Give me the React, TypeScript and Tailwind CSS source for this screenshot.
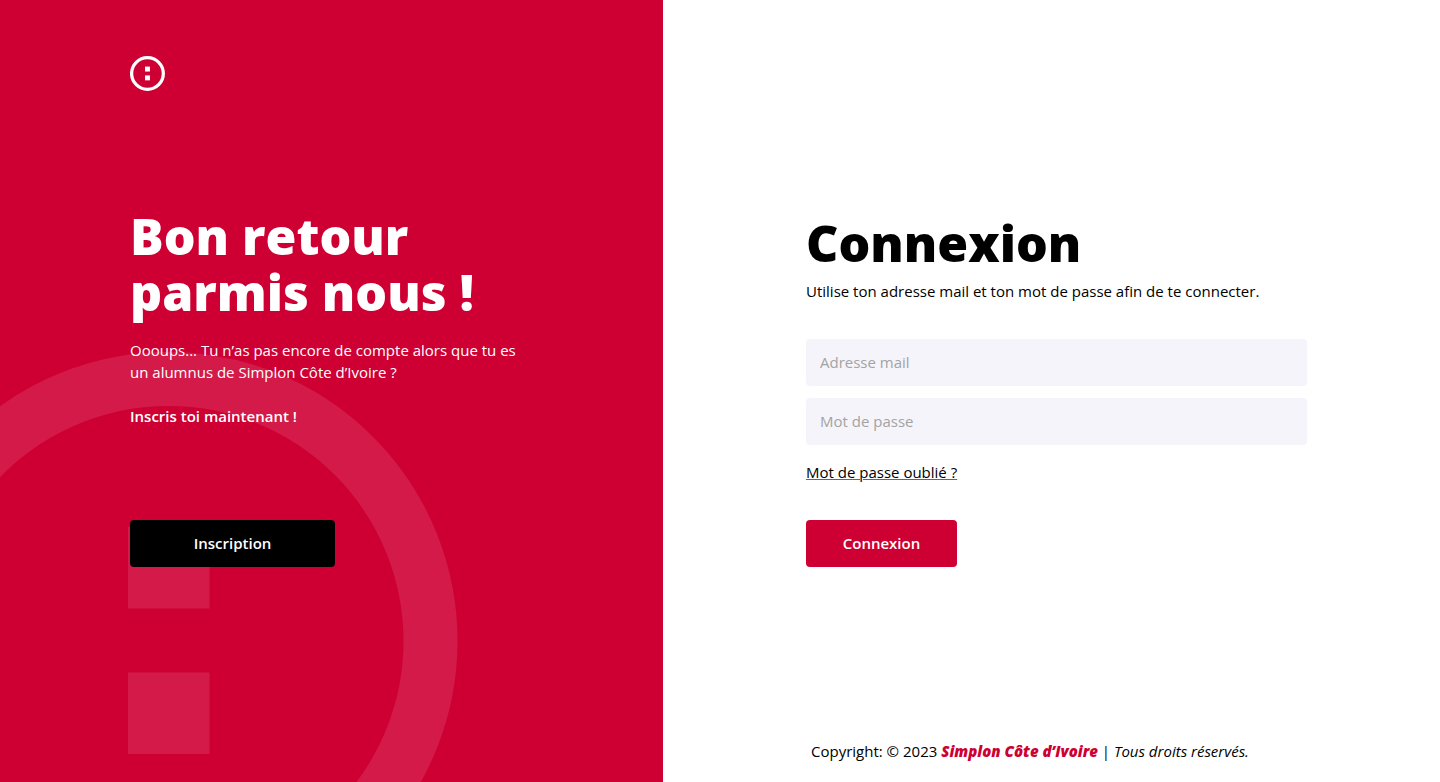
import React from "react";

function Logo({ className }: { className: string }) {
  return (
    <svg viewBox="0 0 578 578" fill="currentColor" className={className} aria-hidden="true">
      <circle cx="288.5" cy="289" r="262" fill="none" stroke="currentColor" strokeWidth="54" />
      <rect x="248" y="175" width="81.5" height="81.5" />
      <rect x="248" y="320.5" width="81.5" height="81.5" />
    </svg>
  );
}

function Field({ id, label, type }: { id: string; label: string; type: string }) {
  return (
    <input
      id={id}
      type={type}
      aria-label={label}
      placeholder={label}
      className="block h-[47px] w-full rounded bg-[#f5f4fa] px-3.5 pb-0.5 outline-none placeholder:text-[#a3a3a3] focus:ring-2 focus:ring-[#ce0033]"
    />
  );
}

export default function App() {
  return (
    <div className="grid min-h-screen grid-cols-[663fr_777fr] bg-white font-['Open_Sans',sans-serif] text-[15px] leading-[22px] text-black">
      <aside className="relative overflow-hidden bg-[#ce0033] pr-12 pl-[130px] text-white">
        <Logo className="absolute top-[352px] -left-[120px] size-[578px] max-w-none opacity-10" />
        <div className="relative">
          <Logo className="mt-[56px] size-[35px]" />
          <h2 className="mt-[117px] max-w-[400px] text-[50px] leading-[56px] font-extrabold">
            Bon retour parmis nous !
          </h2>
          <p className="mt-[19px] max-w-[400px]">
            Oooups... Tu n’as pas encore de compte alors que tu es un alumnus de Simplon Côte d’Ivoire ?
          </p>
          <p className="mt-[22px] font-semibold">Inscris toi maintenant !</p>
          <button type="button" className="mt-[93px] h-[47px] w-[205px] rounded bg-black pb-0.5 font-semibold">
            Inscription
          </button>
        </div>
      </aside>

      <main className="flex flex-col pr-[133px] pl-[143px]">
        <h1 className="mt-[215px] text-[50px] leading-[56px] font-extrabold">Connexion</h1>
        <p className="mt-[9px]">Utilise ton adresse mail et ton mot de passe afin de te connecter.</p>
        <form className="mt-[37px] flex flex-col items-start" onSubmit={(e) => e.preventDefault()}>
          <div className="flex w-full flex-col gap-3">
            <Field id="email" label="Adresse mail" type="email" />
            <Field id="password" label="Mot de passe" type="password" />
          </div>
          <a href="#" className="mt-4 underline decoration-[#666666] decoration-1">
            Mot de passe oublié ?
          </a>
          <button
            type="submit"
            className="mt-[37px] h-[47px] w-[151px] rounded bg-[#ce0033] pb-0.5 font-semibold text-white"
          >
            Connexion
          </button>
        </form>
        <footer className="mt-auto pb-5 pl-[5px]">
          Copyright: © 2023 <strong className="font-extrabold text-[#ce0033] italic">Simplon Côte d’Ivoire</strong> |{" "}
          <em>Tous droits réservés.</em>
        </footer>
      </main>
    </div>
  );
}
